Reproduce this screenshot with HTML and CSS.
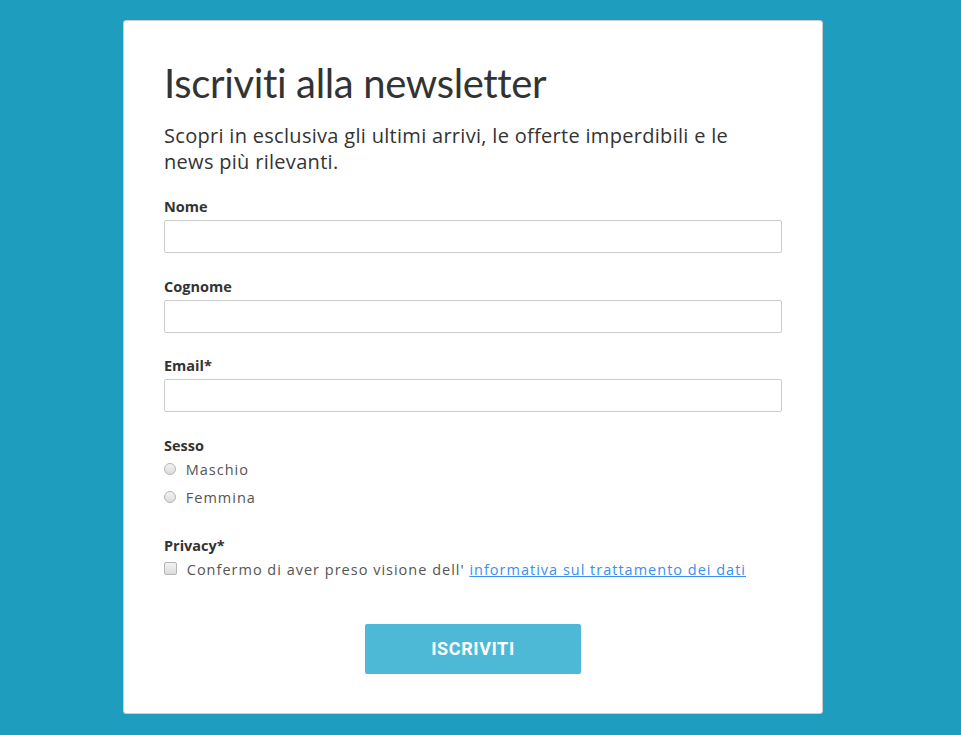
FILE: index.html
```html
<!DOCTYPE html>
<html lang="it">
<head>
    <meta charset="UTF-8">
    <meta name="viewport" content="width=device-width, initial-scale=1.0">
    <title>Newsletter</title>
    <link rel="stylesheet" href="styles.css">
</head>
<body>

    <div class="newsletter_box">
        <h1>Iscriviti alla newsletter</h1>
        <p class="intro">Scopri in esclusiva gli ultimi arrivi, le offerte imperdibili e le news più rilevanti.</p>

        <form class="newsletter_form">
            <div class="field">
                <label for="nome">Nome</label>
                <input type="text" id="nome">
            </div>

            <div class="field">
                <label for="cognome">Cognome</label>
                <input type="text" id="cognome">
            </div>

            <div class="field">
                <label for="email">Email*</label>
                <input type="email" id="email">
            </div>

            <div class="field">
                <span class="field_title">Sesso</span>
                <label class="option"><input type="radio" name="sesso" value="m"> Maschio</label>
                <label class="option"><input type="radio" name="sesso" value="f"> Femmina</label>
            </div>

            <div class="field">
                <span class="field_title">Privacy*</span>
                <label class="option"><input type="checkbox" name="privacy"> Confermo di aver preso visione dell' <a href="#">informativa sul trattamento dei dati</a></label>
            </div>

            <div class="actions">
                <button type="button" class="submit_button">ISCRIVITI</button>
            </div>
        </form>
    </div>

</body>
</html>
```

FILE: styles.css
```css
body {
    font-family: 'Open Sans', sans-serif;
    background-color: #1f9dbf;
    margin: 0;
    padding: 20px 15px 0 0;
}

.newsletter_box {
    width: 700px;
    box-sizing: border-box;
    margin: 0 auto;
    padding: 38px 40px 39px;
    background-color: #fff;
    border: 1px solid #ccc;
    border-radius: 3px;
    color: #333;
}

h1 {
    font-family: 'Lato', sans-serif;
    font-variant-ligatures: none;
    font-size: 40px;
    font-weight: 400;
    line-height: 48px;
    letter-spacing: -0.35px;
    margin: 0 0 16px;
    color: #333;
}

.intro {
    max-width: 590px;
    font-size: 20px;
    line-height: 26px;
    margin: 0 0 23px;
    letter-spacing: 0.3px;
}

.field {
    display: flex;
    flex-direction: column;
    margin-bottom: 24.5px;
}

label,
.field_title {
    display: block;
    font-size: 14.5px;
    font-weight: 700;
    line-height: 18px;
    margin-bottom: 4px;
    color: #333;
}

input[type="text"],
input[type="email"] {
    display: block;
    width: 100%;
    height: 33px;
    box-sizing: border-box;
    border: 1px solid #ccc;
    border-radius: 2px;
    padding: 5px 10px;
    margin: 0;
}

.option {
    font-weight: 400;
    color: #555;
    letter-spacing: 1px;
    font-size: 14.5px;
    line-height: 22px;
    margin: 0 0 6px;
}

.option:last-child {
    margin-bottom: 4px;
}

.option input {
    appearance: none;
    -webkit-appearance: none;
    box-sizing: border-box;
    width: 12px;
    height: 12px;
    margin: 0 5px 0 0;
    border: 1px solid #b5b5b5;
    border-radius: 50%;
    background: linear-gradient(#f2f2f2, #dcdcdc);
    vertical-align: 0;
}

.option input[type="checkbox"] {
    width: 13px;
    height: 13px;
    border-radius: 2px;
}

.option a {
    color: #3a8ff0;
}

.actions {
    text-align: center;
    padding-top: 14px;
}

.submit_button {
    width: 216px;
    height: 50px;
    background-color: #4db9d7;
    color: #fff;
    border: none;
    border-radius: 2px;
    font-family: 'Roboto', sans-serif;
    font-weight: 700;
    font-size: 18px;
    letter-spacing: 0.6px;
    cursor: pointer;
}
```
